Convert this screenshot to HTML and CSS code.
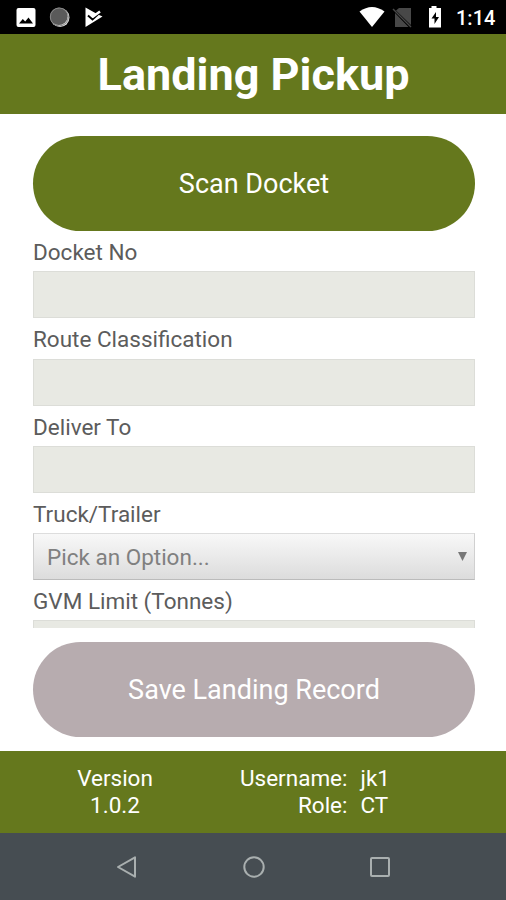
FILE: index.html
```html
<!DOCTYPE html>
<html lang="en">
<head>
    <meta charset="UTF-8">
    <meta name="viewport" content="width=device-width, initial-scale=1.0">
    <title>Landing Pickup</title>
    <link rel="stylesheet" href="styles.css">
</head>
<body>
    <!-- Status bar -->
    <div class="status-bar">
        <svg class="status-icons" width="110" height="34" viewBox="0 0 110 34">
            <path fill="#fff" fill-rule="evenodd" d="M18.500 8h15q2 0 2 2v15q0 2-2 2h-15q-2 0-2-2v-15q0-2 2-2zM19 23.500h14l-4.500-6-3.300 4-2.400-2.500z"/>
            <circle cx="60" cy="17.500" r="9.500" fill="#ddd"/>
            <circle cx="58.800" cy="16.300" r="8.800" fill="#5a5a5a"/>
            <circle cx="59.300" cy="17" r="9" fill="none" stroke="#888" stroke-width="1"/>
            <path fill="#fff" d="M85.500 7.500L98 14.500 102.500 16.500 85.500 27z"/>
            <path fill="none" stroke="#000" stroke-width="2" d="M88 15.500l4.500 4L101 11.500"/>
            <path fill="none" stroke="#fff" stroke-width="2.500" d="M90 13.500l3 3 7-5"/>
        </svg>
        <svg class="status-icons" width="90" height="34" viewBox="0 0 90 34">
            <path fill="#fff" d="M.5 11.500Q13 2.500 25.500 11.500L13 27z"/>
            <path fill="#484848" d="M40 8h12v17L37 10.500zM36 13l13.500 14H36z"/>
            <path stroke="#484848" stroke-width="1.500" d="M34 9l18 18"/>
            <path fill="#fff" d="M70 8h2.500V6h5v2h4.500v19.500H70z"/>
            <path fill="#000" d="M77 12l-4.500 6.500h3V24l4.500-7h-3z"/>
        </svg>
        <span class="clock">1:14</span>
    </div>

    <header class="title-bar">
        <h1>Landing Pickup</h1>
    </header>

    <!-- Scrolling form -->
    <div class="form-area">
        <button class="button scan">Scan Docket</button>
        <label class="label" for="docket">Docket No</label>
        <input class="field" id="docket" type="text">
        <label class="label" for="route">Route Classification</label>
        <input class="field" id="route" type="text">
        <label class="label" for="deliver">Deliver To</label>
        <input class="field" id="deliver" type="text">
        <label class="label">Truck/Trailer</label>
        <div class="picker">
            <span>Pick an Option...</span>
            <svg width="9" height="9" viewBox="0 0 9 9"><path fill="#777" d="M0 0h9L4.500 9z"/></svg>
        </div>
        <label class="label" for="gvm">GVM Limit (Tonnes)</label>
        <input class="field" id="gvm" type="text">
    </div>

    <div class="save-area">
        <button class="button save">Save Landing Record</button>
    </div>

    <footer class="info-bar">
        <div class="version">Version<br>1.0.2</div>
        <div class="user-labels">Username:<br>Role:</div>
        <div class="user-values">jk1<br>CT</div>
    </footer>

    <!-- Android navigation -->
    <nav class="nav-bar">
        <svg width="22" height="24" viewBox="0 0 22 24"><path d="M19 2.300v19.400L2 12z"/></svg>
        <svg width="24" height="24" viewBox="0 0 24 24"><circle cx="12" cy="12" r="9.700"/></svg>
        <svg width="22" height="24" viewBox="0 0 22 24"><rect x="2" y="3" width="18" height="18" rx="1"/></svg>
    </nav>
</body>
</html>
```
FILE: styles.css
```css
* {
    box-sizing: border-box;
}

body {
    margin: 0;
    height: 900px;
    display: flex;
    flex-direction: column;
    overflow: hidden;
    background: #fff;
    font-family: Roboto, "Liberation Sans", sans-serif;
}

/* Status bar */
.status-bar {
    height: 34px;
    display: flex;
    align-items: center;
    background: #000;
    color: #fff;
}

.status-icons + .status-icons {
    margin-left: 249px;
}

.clock {
    margin-left: 7px;
    padding-top: 2px;
    font-size: 20px;
    font-weight: 500;
}

.title-bar {
    height: 80px;
    display: flex;
    align-items: center;
    justify-content: center;
    background: #65781d;
}

h1 {
    margin: 0;
    padding-left: 1px;
    color: #fff;
    font-size: 45px;
    font-weight: 700;
}

/* Form */
.form-area {
    height: 514px;
    padding: 22px 31px 0 33px;
    overflow: hidden;
}

.button {
    display: block;
    width: 100%;
    height: 95px;
    padding: 0;
    border: 0;
    border-radius: 48px;
    color: #fff;
    font-family: inherit;
    font-size: 27px;
}

.scan {
    background: #65781d;
}

.save {
    background: #b7acaf;
}

.label {
    display: block;
    height: 40.3px;
    line-height: 42px;
    color: #5c5c5c;
    font-size: 22.5px;
}

.field,
.picker {
    display: block;
    width: 100%;
    height: 47px;
    border: 1px solid #dcddd8;
    background: #e8e9e3;
}

.picker {
    display: flex;
    align-items: center;
    justify-content: space-between;
    padding: 0 7px 0 13px;
    border-color: #ddd #d0d0d0 #bbb;
    background: linear-gradient(#f8f8f8, #dcdcdc);
    color: #808080;
    font-size: 22.5px;
}

.save-area {
    height: 123px;
    padding: 14px 31px 0 33px;
}

/* Footer */
.info-bar {
    height: 82px;
    display: flex;
    padding-top: 14px;
    background: #65781d;
    color: #fff;
    font-size: 22.5px;
    line-height: 27px;
}

.version {
    width: 230px;
    text-align: center;
}

.user-labels {
    width: 117.5px;
    text-align: right;
}

.user-values {
    padding-left: 13px;
}

.nav-bar {
    height: 67px;
    display: flex;
    align-items: center;
    justify-content: space-between;
    padding: 0 115px 0 116px;
    background: #464d52;
}

.nav-bar svg {
    fill: none;
    stroke: #a9afaf;
    stroke-width: 2;
    stroke-linejoin: round;
}
```
